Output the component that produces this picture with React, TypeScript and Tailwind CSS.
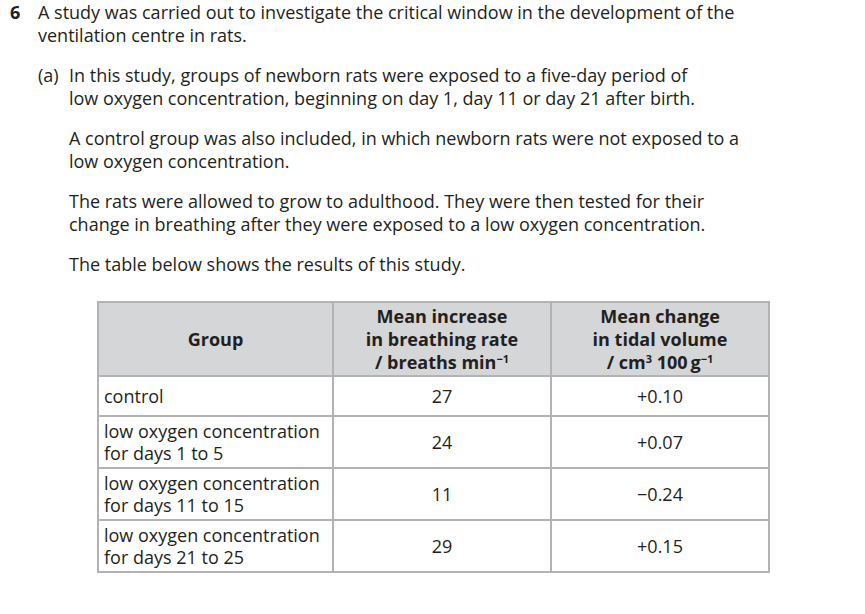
import React from 'react';

const rows = [
  { group: ['control'], rate: '27', volume: '+0.10', h: 'h-[40px]' },
  { group: ['low oxygen concentration', 'for days 1 to 5'], rate: '24', volume: '+0.07', h: 'h-[52px]' },
  { group: ['low oxygen concentration', 'for days 11 to 15'], rate: '11', volume: '\u22120.24', h: 'h-[52px]' },
  { group: ['low oxygen concentration', 'for days 21 to 25'], rate: '29', volume: '+0.15', h: 'h-[50px]' },
];

function Lines({ lines }: { lines: string[] }) {
  return (
    <>
      {lines.map((l) => (
        <div key={l} className="whitespace-nowrap">
          {l}
        </div>
      ))}
    </>
  );
}

export default function App() {
  return (
    <div className="w-[865px] h-[614px] bg-white text-[#231f20] font-['Open_Sans',sans-serif] text-[18px] leading-[23px] overflow-hidden">
      <div className="flex pt-[1px]">
        <div className="w-[38px] pl-[10px] font-bold">6</div>
        <div>
          <Lines
            lines={[
              'A study was carried out to investigate the critical window in the development of the',
              'ventilation centre in rats.',
            ]}
          />

          {/* part (a) */}
          <div className="flex mt-[17px]">
            <div className="w-[31px]">(a)</div>
            <div className="flex flex-col gap-[17px]">
              <div>
                <Lines
                  lines={[
                    'In this study, groups of newborn rats were exposed to a five-day period of',
                    'low oxygen concentration, beginning on day 1, day 11 or day 21 after birth.',
                  ]}
                />
              </div>
              <div>
                <Lines
                  lines={[
                    'A control group was also included, in which newborn rats were not exposed to a',
                    'low oxygen concentration.',
                  ]}
                />
              </div>
              <div>
                <Lines
                  lines={[
                    'The rats were allowed to grow to adulthood. They were then tested for their',
                    'change in breathing after they were exposed to a low oxygen concentration.',
                  ]}
                />
              </div>
              <div>The table below shows the results of this study.</div>
            </div>
          </div>
        </div>
      </div>

      {/* results table */}
      <div className="ml-[97px] mt-[25px] w-[673px] border-2 border-[#b3b3b6]">
        <div className="flex h-[74px] bg-[#d5d6d8] border-b-2 border-[#b3b3b6] font-bold text-center">
          <div className="w-[235px] flex items-center justify-center border-r-2 border-[#b3b3b6]">Group</div>
          <div className="w-[218px] flex flex-col items-center justify-center border-r-2 border-[#b3b3b6]">
            <div>Mean increase</div>
            <div>in breathing rate</div>
            <div>
              / breaths min<sup className="text-[11px]">{'\u22121'}</sup>
            </div>
          </div>
          <div className="flex-1 flex flex-col items-center justify-center">
            <div>Mean change</div>
            <div>in tidal volume</div>
            <div>
              / cm<sup className="text-[11px]">3</sup> 100{'\u2009'}g<sup className="text-[11px]">{'\u22121'}</sup>
            </div>
          </div>
        </div>
        {rows.map((r, i) => (
          <div
            key={i}
            className={`flex ${r.h} ${i < rows.length - 1 ? 'border-b-2 border-[#b3b3b6]' : ''}`}
          >
            <div className="w-[235px] pl-[5px] flex flex-col justify-center border-r-2 border-[#b3b3b6] leading-[22px]">
              <Lines lines={r.group} />
            </div>
            <div className="w-[218px] flex items-center justify-center border-r-2 border-[#b3b3b6]">{r.rate}</div>
            <div className="flex-1 flex items-center justify-center">{r.volume}</div>
          </div>
        ))}
      </div>
    </div>
  );
}
